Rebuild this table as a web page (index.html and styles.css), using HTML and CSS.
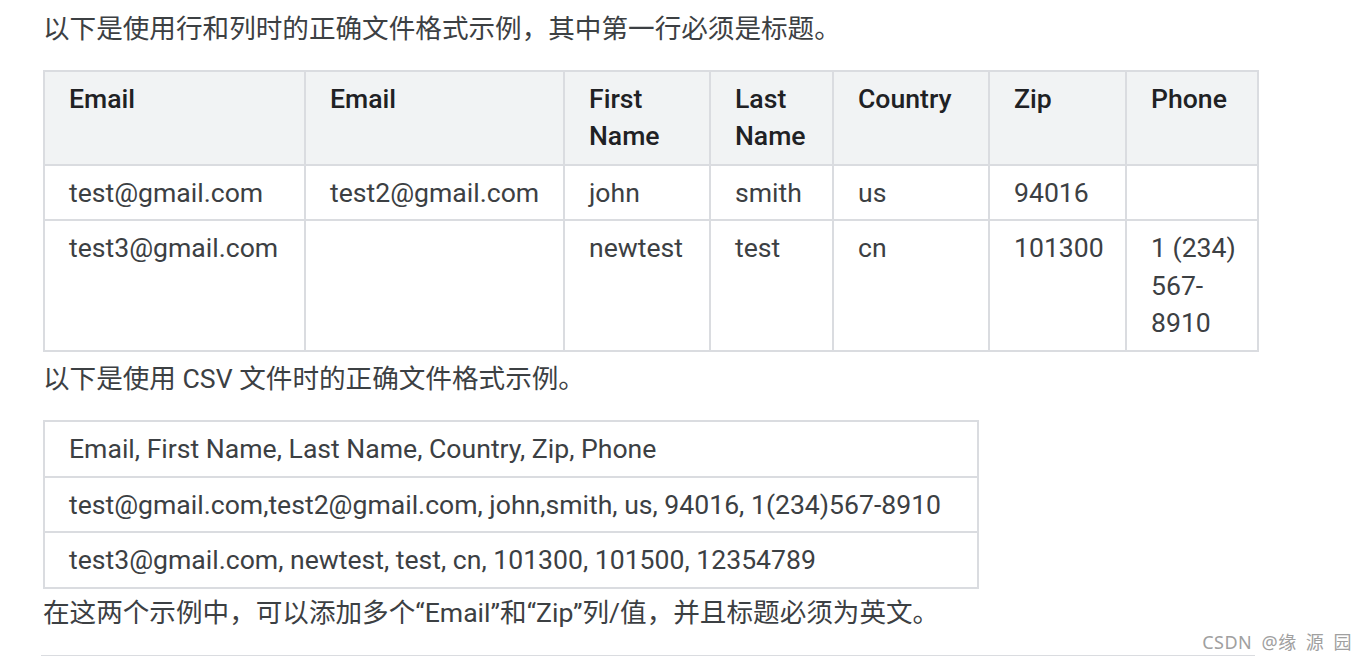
FILE: index.html
```html
<!DOCTYPE html>
<html lang="zh">
<head>
<meta charset="utf-8">
<title>文件格式示例</title>
<link rel="stylesheet" href="styles.css">
</head>
<body>
<main class="article">
  <p class="para para-first">以下是使用行和列时的正确文件格式示例，其中第一行必须是标题。</p>
  <table class="grid grid-wide">
    <colgroup>
      <col class="c1"><col class="c2"><col class="c3"><col class="c4"><col class="c5"><col class="c6"><col class="c7">
    </colgroup>
    <thead>
      <tr><th>Email</th><th>Email</th><th>First Name</th><th>Last Name</th><th>Country</th><th>Zip</th><th class="last">Phone</th></tr>
    </thead>
    <tbody>
      <tr><td>test@gmail.com</td><td>test2@gmail.com</td><td>john</td><td>smith</td><td>us</td><td>94016</td><td class="last"></td></tr>
      <tr><td>test3@gmail.com</td><td></td><td>newtest</td><td>test</td><td>cn</td><td>101300</td><td class="last">1 (234) 567-8910</td></tr>
    </tbody>
  </table>
  <p class="para para-mid">以下是使用 CSV 文件时的正确文件格式示例。</p>
  <table class="grid grid-csv">
    <tbody>
      <tr><td>Email, First Name, Last Name, Country, Zip, Phone</td></tr>
      <tr><td>test@gmail.com,test2@gmail.com, john,smith, us, 94016, 1(234)567-8910</td></tr>
      <tr><td>test3@gmail.com, newtest, test, cn, 101300, 101500, 12354789</td></tr>
    </tbody>
  </table>
  <p class="para para-last">在这两个示例中，可以添加多个“Email”和“Zip”列/值，并且标题必须为英文。</p>
  <hr class="rule">
</main>
<div class="watermark">CSDN @缘 源 园</div>
</body>
</html>
```

FILE: styles.css
```css
html, body {
  margin: 0;
  padding: 0;
  background: #ffffff;
}

body {
  font-family: Roboto, "Noto Sans CJK SC", sans-serif;
  color: #3c4043;
  font-size: 26.6px;
  line-height: 37.5px;
  position: relative;
  height: 660px;
  overflow: hidden;
}

.article {
  padding: 10px 0 0 43px;
  width: 1214px;
}

.para {
  margin: 0;
}

.para-first {
  margin-bottom: 22px;
}

.para-mid {
  margin: 8px 0 23px;
}

.para-last {
  margin: 5px 0 0;
}

.grid {
  border-collapse: collapse;
}

.grid th,
.grid td {
  border: 2px solid #dadce0;
  padding: 8px 24px 8px;
  text-align: left;
  vertical-align: top;
}

.grid th {
  background: #f1f3f4;
  color: #202124;
  font-weight: 500;
  padding-bottom: 9px;
}

.grid .last {
  padding-right: 14px;
}

.grid-wide {
  width: 1214px;
  table-layout: fixed;
}

.c1 { width: 261px; }
.c2 { width: 259px; }
.c3 { width: 146px; }
.c4 { width: 123px; }
.c5 { width: 156px; }
.c6 { width: 137px; }
.c7 { width: 132px; }

.grid-csv {
  width: 936px;
}

.rule {
  border: 0;
  border-top: 1px solid #dadce0;
  margin: 24px 0 0 -2px;
  width: 1214px;
}

.watermark {
  position: absolute;
  right: 14px;
  bottom: 7px;
  font-family: "Noto Sans", "Noto Sans CJK SC", sans-serif;
  font-size: 18px;
  line-height: 22px;
  color: #a0a0a0;
  word-spacing: 4px;
  letter-spacing: 0.5px;
}
```
